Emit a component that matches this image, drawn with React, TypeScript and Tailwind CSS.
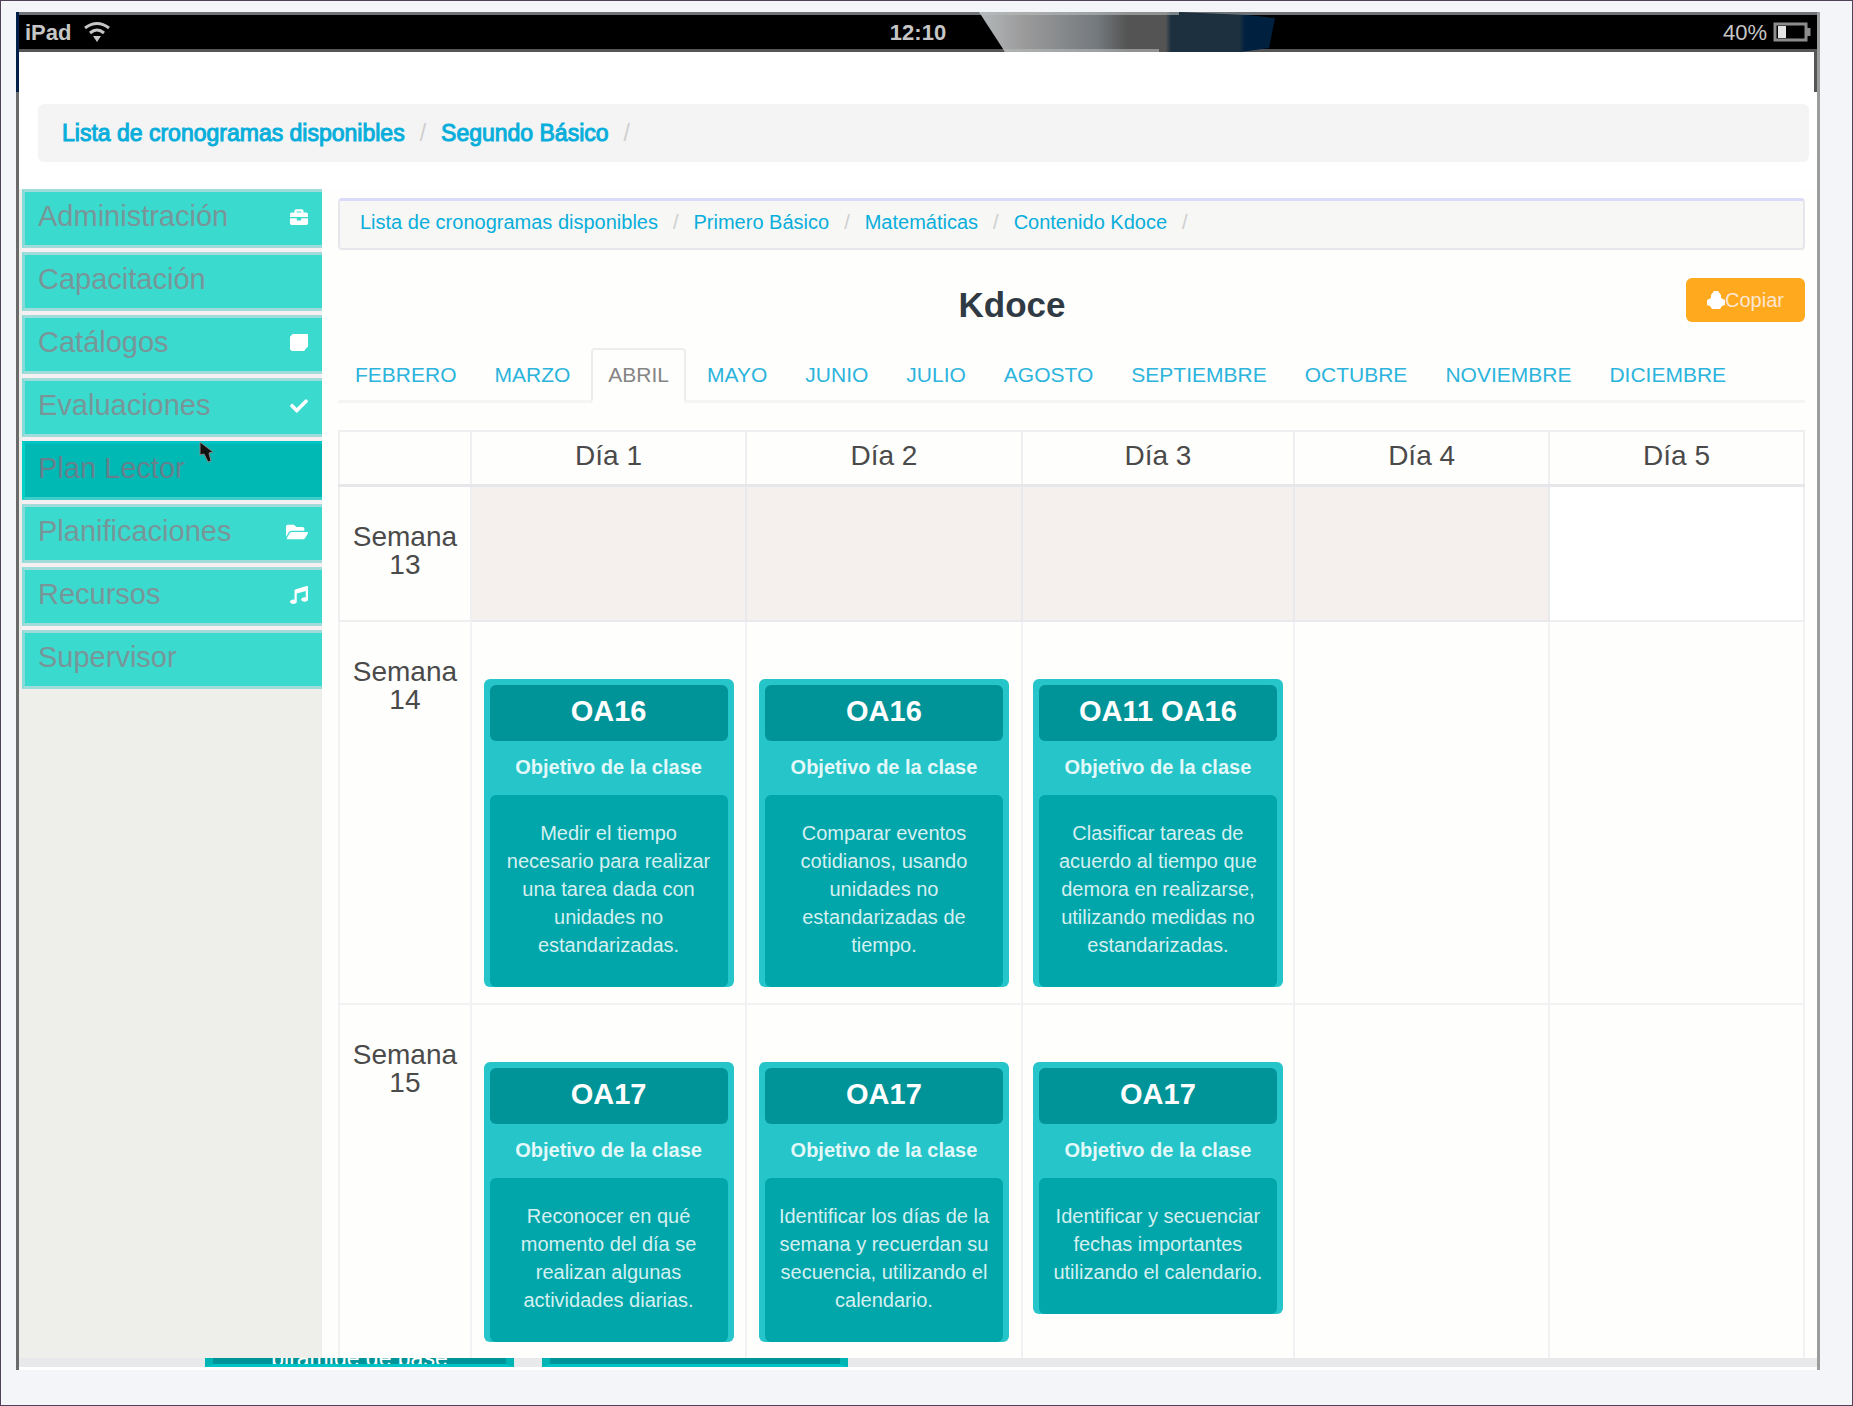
import React from 'react';
import { FaBriefcase, FaCheck, FaFolderOpen, FaMusic } from 'react-icons/fa';

type Lesson = { code: string; goal: string[] };

const menu: { label: string; icon?: React.ReactNode; active?: boolean }[] = [
  { label: 'Administración', icon: <FaBriefcase /> },
  { label: 'Capacitación' },
  {
    label: 'Catálogos',
    icon: (
      <svg viewBox="0 0 20 20" width="18" height="18" fill="currentColor">
        <path d="M3 0h17v14l-3 3-1 2H2l-2-2V3z" />
      </svg>
    ),
  },
  { label: 'Evaluaciones', icon: <FaCheck /> },
  { label: 'Plan Lector', active: true },
  { label: 'Planificaciones', icon: <FaFolderOpen className="text-[22px]" /> },
  { label: 'Recursos', icon: <FaMusic /> },
  { label: 'Supervisor' },
];

const months = ['FEBRERO', 'MARZO', 'ABRIL', 'MAYO', 'JUNIO', 'JULIO', 'AGOSTO', 'SEPTIEMBRE', 'OCTUBRE', 'NOVIEMBRE', 'DICIEMBRE'];
const days = ['Día 1', 'Día 2', 'Día 3', 'Día 4', 'Día 5'];

const weeks: { n: number; lessons: Lesson[] }[] = [
  {
    n: 14,
    lessons: [
      { code: 'OA16', goal: ['Medir el tiempo', 'necesario para realizar', 'una tarea dada con', 'unidades no', 'estandarizadas.'] },
      { code: 'OA16', goal: ['Comparar eventos', 'cotidianos, usando', 'unidades no', 'estandarizadas de', 'tiempo.'] },
      { code: 'OA11 OA16', goal: ['Clasificar tareas de', 'acuerdo al tiempo que', 'demora en realizarse,', 'utilizando medidas no', 'estandarizadas.'] },
    ],
  },
  {
    n: 15,
    lessons: [
      { code: 'OA17', goal: ['Reconocer en qué', 'momento del día se', 'realizan algunas', 'actividades diarias.'] },
      { code: 'OA17', goal: ['Identificar los días de la', 'semana y recuerdan su', 'secuencia, utilizando el', 'calendario.'] },
      { code: 'OA17', goal: ['Identificar y secuenciar', 'fechas importantes', 'utilizando el calendario.'] },
    ],
  },
];

function Crumbs({ items, strong }: { items: string[]; strong?: boolean }) {
  return (
    <ol className="flex items-center">
      {items.map((t) => (
        <li key={t} className="flex items-center whitespace-nowrap">
          <a href="#" className={`text-[#08aedb] ${strong ? '[-webkit-text-stroke:1px_#08aedb]' : ''}`}>{t}</a>
          <span className="mx-[15px] text-[#cfcfcf]">/</span>
        </li>
      ))}
    </ol>
  );
}

function StatusBar() {
  return (
    <header className="relative flex h-10 items-center justify-between border-y-3 border-t-[#6f7377] border-b-[#555] bg-black pr-1.5 pl-1.5 text-[22px] text-[#c6c6c6]">
      <svg className="absolute -top-[3px] left-[53.4%] h-10 w-[300px]" viewBox="0 0 300 40">
        <defs>
          <linearGradient id="glare" x1="0" x2="1">
            <stop offset="0" stopColor="#b4b8ba" />
            <stop offset="0.15" stopColor="#9b9b9b" />
            <stop offset="0.4" stopColor="#74797d" />
            <stop offset="0.5" stopColor="#545454" />
            <stop offset="0.63" stopColor="#545454" />
            <stop offset="0.65" stopColor="#1c3040" />
            <stop offset="0.88" stopColor="#1c3040" />
            <stop offset="0.9" stopColor="#002040" />
            <stop offset="1" stopColor="#002040" />
          </linearGradient>
        </defs>
        <path d="M0 0H200L268 3 296 6 290 36 262 40H26z" fill="url(#glare)" />
        <path d="M0 0H200V3H2zM26 40H180V37H24z" fill="#b9bdbd" fillOpacity="0.6" />
      </svg>
      <div className="flex flex-1 items-center gap-3">
        <span className="font-bold">iPad</span>
        <svg width="28" height="22" viewBox="0 0 28 22" fill="none" stroke="currentColor" strokeWidth="3">
          <path d="M2 7Q14-2 26 7M7 12Q14 6 21 12" />
          <path d="M10 15h8l-4 6z" fill="currentColor" stroke="none" />
        </svg>
      </div>
      <span className="font-bold">12:10</span>
      <div className="flex flex-1 items-center justify-end gap-1.5">
        <span>40%</span>
        <svg width="38" height="20" viewBox="0 0 38 20" fill="none" stroke="#8c8c8c" strokeWidth="3">
          <path d="M2 2H33V18H2zM36 6V14" />
          <path d="M5 4H13V16H5z" fill="#e5e5e5" stroke="none" />
        </svg>
      </div>
    </header>
  );
}

function Card({ code, goal }: Lesson) {
  return (
    <article className="mx-auto mb-4 max-w-[250px] rounded-md bg-[#26c5c9] px-1.5 pt-1.5 text-center text-xl text-[#d5f0f1]">
      <h3 className="rounded-md bg-[#009499] pb-1 text-[29px] leading-[52px] font-bold text-white">{code}</h3>
      <p className="pt-3 pb-3.5 leading-7 font-bold text-[#e3f8f9]">Objetivo de la clase</p>
      <p className="rounded-md bg-[#00a6a9] pt-6 pb-7 leading-7 whitespace-nowrap">
        {goal.map((l) => (
          <span key={l} className="block">{l}</span>
        ))}
      </p>
    </article>
  );
}

export default function App() {
  return (
    <div className="min-h-screen border border-[#52415a] bg-[#f4f5f8] pt-[11px] pr-8 pl-[15px] font-['Liberation_Sans',Arial,sans-serif]">
      <div className="relative border-r-3 border-l-3 border-r-[#9c9c9c] border-l-[#6a6a6a] bg-white">
        <span className="absolute top-0 -left-[3px] h-20 w-[3px] bg-[#00204a]" />
        <span className="absolute top-10 right-0 h-10 w-[3px] bg-[#555]" />
        <StatusBar />
        <nav className="mt-[52px] mr-2 ml-[19px] rounded-md bg-[#f4f4f4] px-6 py-[15px] text-[23px] leading-7">
          <Crumbs items={['Lista de cronogramas disponibles', 'Segundo Básico']} strong />
        </nav>

        <div className="mt-[27px] flex bg-[#fefefc]">
          <aside className="w-[303px] shrink-0 bg-[#eeeeea] pl-[3px]">
            <ul className="flex flex-col gap-1 bg-[#f6f0f3]">
              {menu.map((m) => (
                <li key={m.label}>
                  <a
                    href="#"
                    className={`flex h-[59px] items-center justify-between border-y-3 border-l-3 pr-3.5 pb-1 pl-[13px] text-[29px] ${
                      m.active
                        ? 'border-t-[#00c4c6] border-b-[#3fcfcb] border-l-[#00d2c8] bg-[#00b8b4] text-[#66808c]'
                        : 'border-y-[#9fdcda] border-l-[#84dad6] bg-[#3bdacf] text-[#789698]'
                    }`}
                  >
                    {m.label}
                    <span className="text-lg text-white">{m.icon}</span>
                  </a>
                </li>
              ))}
            </ul>
          </aside>

          <main className="mr-3 ml-4 min-w-0 flex-1 pt-[9px]">
            <nav className="rounded border-2 border-t-3 border-[#e6e7eb] border-t-[#dadafa] bg-[#f7f7f5] px-5 pt-[7px] pb-3 text-xl leading-7">
              <Crumbs items={['Lista de cronogramas disponibles', 'Primero Básico', 'Matemáticas', 'Contenido Kdoce']} />
            </nav>

            <div className="mt-7 flex items-start">
              <h1 className="flex-1 text-center text-[35px] leading-[54px] font-bold text-[#2f3a44]">Kdoce</h1>
              <button className="flex h-11 w-[119px] items-center justify-center rounded-md bg-[#ffa91f] text-xl text-[#fbe6d2]">
                <svg width="18" height="18" viewBox="0 0 18 18" fill="white">
                  <path d="M7 0h4l3 4v3l4 2v5l-3 1-2 3H5l-2-3-3-1V9l4-2V4z" />
                </svg>
                Copiar
              </button>
            </div>

            <div className="mt-4 flex gap-1 border-b-3 border-[#f5f5f5]" role="tablist">
              {months.map((m) => (
                <button
                  key={m}
                  role="tab"
                  aria-selected={m === 'ABRIL'}
                  className={`-mb-[3px] h-[55px] rounded-t border-2 border-b-3 px-[15px] text-[21px] ${
                    m === 'ABRIL' ? 'border-[#ededf0] border-b-[#fefefc] bg-[#fefefc] text-[#858585]' : 'border-transparent text-[#2cb4dc]'
                  }`}
                >
                  {m}
                </button>
              ))}
            </div>

            <table className="mt-[27px] w-full table-fixed border-collapse text-[28px] leading-7 text-[#4a4a4a]">
              <colgroup>
                <col className="w-[9%]" />
                <col className="w-[18.8%]" />
                <col className="w-[18.8%]" />
                <col className="w-[18.6%]" />
                <col className="w-[17.4%]" />
                <col className="w-[17.4%]" />
              </colgroup>
              <thead>
                <tr className="h-[54px]">
                  <td className="border-2 border-b-3 border-[#efeff2] border-b-[#e6e7eb]" />
                  {days.map((d) => (
                    <th key={d} className="border-2 border-b-3 border-[#efeff2] border-b-[#e6e7eb] pb-1 font-normal">{d}</th>
                  ))}
                </tr>
              </thead>
              <tbody>
                <tr className="h-[136px]">
                  <th className="border-2 border-[#efeff2] pt-9 align-top font-normal">Semana 13</th>
                  {[1, 2, 3, 4].map((d) => (
                    <td key={d} className="border-2 border-[#e8e9ed] bg-[#f5f0ee]" />
                  ))}
                  <td className="border-2 border-[#efeff2] bg-white" />
                </tr>
                {weeks.map((w) => (
                  <tr key={w.n}>
                    <th className="border-2 border-b-0 border-[#f2f2f4] pt-9 align-top font-normal">Semana {w.n}</th>
                    {w.lessons.map((l, i) => (
                      <td key={i} className="border-2 border-b-0 border-[#f2f2f4] px-2.5 pt-[57px] align-top">
                        <Card {...l} />
                      </td>
                    ))}
                    <td className="border-2 border-b-0 border-[#f2f2f4]" />
                    <td className="border-2 border-b-0 border-[#f2f2f4]" />
                  </tr>
                ))}
              </tbody>
            </table>
          </main>
        </div>

        <div className="flex h-3 items-start overflow-hidden border-b-3 border-white bg-[#e8e9eb] pl-[186px]">
          <div className="flex h-[9px] w-[309px] items-end justify-center overflow-hidden border-x-8 border-b-3 border-x-[#00b4b4] border-b-[#00c4c6] bg-[#009499]">
            <span className="text-[23px] leading-3 text-white">pirámide de base</span>
          </div>
          <div className="ml-7 h-[9px] w-[306px] border-x-8 border-b-3 border-x-[#00b4b4] border-b-[#00c4c6] bg-[#009499]" />
        </div>

        <svg className="absolute top-[426px] left-[178px]" width="18" height="26" viewBox="0 0 18 26">
          <path d="M3 4V17L7 16 11 24 14 23 12 15 16 14z" fill="#111" stroke="#8a8a8a" strokeWidth="1" />
        </svg>
      </div>
    </div>
  );
}
